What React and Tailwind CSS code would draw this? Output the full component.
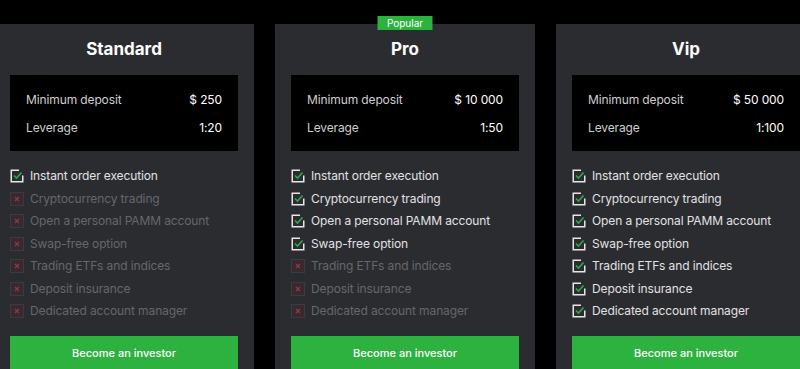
const FEATURES = [
  'Instant order execution',
  'Cryptocurrency trading',
  'Open a personal PAMM account',
  'Swap-free option',
  'Trading ETFs and indices',
  'Deposit insurance',
  'Dedicated account manager',
];

const PLANS = [
  { name: 'Standard', deposit: '$ 250', leverage: '1:20', enabled: 1 },
  { name: 'Pro', deposit: '$ 10 000', leverage: '1:50', enabled: 4, popular: true },
  { name: 'Vip', deposit: '$ 50 000', leverage: '1:100', enabled: 7 },
];

function CheckIcon() {
  return (
    <svg width="14" height="14" viewBox="0 0 14 14" className="shrink-0">
      <path d="M9 1.25H1.25V12.75H12.75V6.5" fill="none" stroke="#e6e6e6" strokeWidth="1.5" />
      <path d="M4 6.5L6.5 9L11.5 3.5" fill="none" stroke="#2fa84a" strokeWidth="1.6" />
    </svg>
  );
}

function CrossIcon() {
  return (
    <svg width="14" height="14" viewBox="0 0 14 14" className="shrink-0">
      <rect x="0.5" y="0.5" width="13" height="13" fill="#37292e" stroke="#3b3c41" />
      <path d="M5 5L9 9M9 5L5 9" stroke="#8c3a47" strokeWidth="1.3" />
    </svg>
  );
}

function PlanCard({ plan }) {
  return (
    <div className="relative w-[260px] shrink-0 bg-[#2b2c30] px-4 pt-[11px]">
      {plan.popular && (
        <div className="absolute left-1/2 top-[-8px] -translate-x-1/2 w-[55px] h-[14px] bg-[#2db13f] text-white text-[10px] leading-[14px] text-center">
          Popular
        </div>
      )}
      <div className="text-center text-white font-bold text-[17px] leading-[28px]">{plan.name}</div>
      <div className="mt-3 bg-black px-4 pt-[15px] pb-[13px] flex flex-col gap-2 text-[12px] tracking-[-0.01em] leading-5">
        <div className="flex justify-between">
          <span className="text-[#cfcfd1]">Minimum deposit</span>
          <span className="text-white">{plan.deposit}</span>
        </div>
        <div className="flex justify-between">
          <span className="text-[#cfcfd1]">Leverage</span>
          <span className="text-white">{plan.leverage}</span>
        </div>
      </div>
      <ul className="mt-[14px] flex flex-col">
        {FEATURES.map((f, i) => {
          const on = i < plan.enabled;
          return (
            <li key={f} className="flex items-center gap-[6px] h-[22.5px] text-[12px] tracking-[-0.01em]">
              {on ? <CheckIcon /> : <CrossIcon />}
              <span className={on ? 'text-[#e2e2e4]' : 'text-[#66676c]'}>{f}</span>
            </li>
          );
        })}
      </ul>
      <button className="mt-[13px] w-full h-9 bg-[#2db13f] text-white text-[11px] font-medium">
        Become an investor
      </button>
    </div>
  );
}

export default function App() {
  return (
    <div
      className="w-[800px] h-[369px] bg-black overflow-hidden"
      style={{ fontFamily: 'Inter, "Noto Sans", sans-serif' }}
    >
      <div className="flex gap-[21px] ml-[-6px] pt-6">
        {PLANS.map(p => (
          <PlanCard key={p.name} plan={p} />
        ))}
      </div>
    </div>
  );
}
